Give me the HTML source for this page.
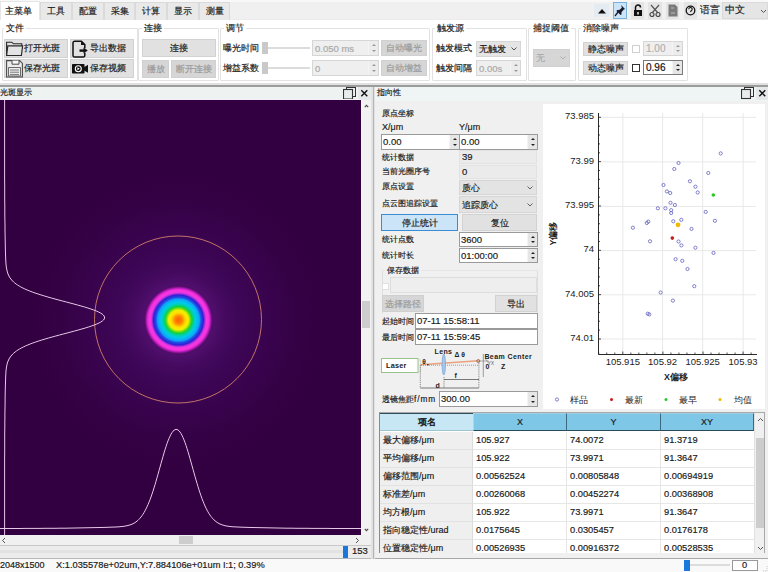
<!DOCTYPE html>
<html><head><meta charset="utf-8">
<style>
*{box-sizing:border-box;margin:0;padding:0}
html,body{width:768px;height:572px;overflow:hidden;background:#f0f0f0}
body{position:relative;font-family:"Liberation Sans",sans-serif;font-size:9px;color:#1a1a1a;line-height:1;-webkit-text-stroke-width:0.18px}
.a{position:absolute}
.t{position:absolute;white-space:nowrap;line-height:12px}
.tab{position:absolute;top:2px;height:18px;background:#e9e9e9;border:1px solid #dadada;border-bottom:none;text-align:center;line-height:17px;font-size:9.3px;color:#222}
.grp{position:absolute;border:1px solid #e2e2e2;border-radius:1px}
.gt{position:absolute;background:#fff;padding:0 2px;line-height:11px;font-size:9.3px;color:#222}
.btn{position:absolute;background:#e1e1e1;border:1px solid #d2d2d2;text-align:center;font-size:9.3px;color:#1a1a1a}
.dis{background:#d6d6d6;border-color:#d0d0d0;color:#9a9a9a}
.inp{position:absolute;background:#fff;border:1px solid #7a7a7a}
.inpd{position:absolute;background:#efefef;border:1px solid #d6d6d6;color:#a0a0a0}
.spin{position:absolute;right:1px;top:1px;bottom:1px;width:8px}
.sp{position:absolute;right:0;top:0;bottom:0;width:10px;background:#e6e6e6;border-left:1px solid #f4f4f4}
.sp:before{content:"";position:absolute;left:3px;top:3px;border-left:2px solid transparent;border-right:2px solid transparent;border-bottom:2px solid #222}
.sp:after{content:"";position:absolute;left:3px;bottom:3px;border-left:2px solid transparent;border-right:2px solid transparent;border-top:2px solid #222}
.spd:before{border-bottom-color:#999}.spd:after{border-top-color:#999}
.cv{position:absolute;right:3px;top:50%;margin-top:-2px;width:6px;height:4px}
</style></head><body>

<!-- ===== top tab bar ===== -->
<div class="a" style="left:0;top:0;width:768px;height:20px;background:#f0f0f0"></div>
<div class="a" style="left:0;top:0;width:768px;height:1.5px;background:#f8f8f8"></div>
<div class="a" style="left:0;top:18.5px;width:768px;height:1.5px;background:#ebebeb"></div>
<div class="a" style="left:0;top:1px;width:40px;height:20px;background:#fff;border:1px solid #e6e6e6;border-bottom:none"></div>
<div class="t" style="left:5px;top:5px;font-size:9.3px">主菜单</div>
<div class="tab" style="left:40px;width:32px">工具</div>
<div class="tab" style="left:72px;width:32px">配置</div>
<div class="tab" style="left:104px;width:31px">采集</div>
<div class="tab" style="left:135px;width:32px">计算</div>
<div class="tab" style="left:167px;width:32px">显示</div>
<div class="tab" style="left:199px;width:31px">测量</div>

<!-- ===== ribbon ===== -->
<div class="a" style="left:0;top:20px;width:768px;height:64px;background:#fff"></div>
<!-- group 文件 -->
<div class="grp" style="left:2px;top:28px;width:136px;height:53px"></div>
<div class="gt" style="left:4px;top:23px">文件</div>
<div class="btn" style="left:4px;top:39px;width:64px;height:19px"></div>
<div class="t" style="left:24px;top:42px;font-size:9.3px">打开光斑</div>
<svg class="a" style="left:5px;top:41px" width="19" height="16" viewBox="0 0 19 16"><path d="M1.6 14.5V1.2h5.2l1.6 1.6h8.4v2" fill="none" stroke="#2a2a2a" stroke-width="1.1"/><path d="M1.6 14.5l1.2-9.6h14.8l-1.2 9.6z" fill="#e4e4e4" stroke="#2a2a2a" stroke-width="1.2"/></svg>
<div class="btn" style="left:70px;top:39px;width:64px;height:19px"></div>
<div class="t" style="left:90px;top:42px;font-size:9.3px">导出数据</div>
<svg class="a" style="left:72px;top:39.5px" width="17" height="18" viewBox="0 0 17 18"><path d="M12.8 8.2V4.6L9.4 1.2H2.6A1.6 1.6 0 0 0 1 2.8v12.6A1.6 1.6 0 0 0 2.6 17h8.6a1.6 1.6 0 0 0 1.6-1.6v-2.6" fill="none" stroke="#111" stroke-width="1.5"/><path d="M9 1.5v3.6h3.6z" fill="#111"/><path d="M7.5 10.6h4.5" stroke="#111" stroke-width="2.4"/><path d="M11.5 7.6l4.3 3-4.3 3z" fill="#111"/></svg>
<div class="btn" style="left:4px;top:59px;width:64px;height:19px"></div>
<div class="t" style="left:24px;top:62px;font-size:9.3px">保存光斑</div>
<svg class="a" style="left:6px;top:60px" width="17" height="18" viewBox="0 0 17 18"><path d="M0.6 0.6h13l2.8 2.8v13.6h-15.8z" fill="#ececec" stroke="#4a4a4a" stroke-width="1.1"/><path d="M6 0.6v3.6h7v-3.6" fill="#f8f8f8" stroke="#4a4a4a" stroke-width="1"/><rect x="2.6" y="7.6" width="11.8" height="8.4" fill="#f4f4f4" stroke="#555" stroke-width="0.9"/><path d="M4 10h9M4 12.2h9M4 14.4h9" stroke="#666" stroke-width="0.9"/></svg>
<div class="btn" style="left:70px;top:59px;width:64px;height:19px"></div>
<div class="t" style="left:90px;top:62px;font-size:9.3px">保存视频</div>
<svg class="a" style="left:72px;top:64px" width="17" height="10" viewBox="0 0 17 10"><rect x="0" y="0" width="12.5" height="9.5" rx="0.8" fill="#111"/><path d="M12 3.2l4-2.4v8l-4-2.4z" fill="#111"/><circle cx="6.3" cy="4.75" r="3" fill="none" stroke="#fff" stroke-width="1.1"/><path d="M5.4 3.3l2.4 1.45-2.4 1.45z" fill="#fff"/></svg>

<!-- group 连接 -->
<div class="grp" style="left:138px;top:28px;width:81px;height:53px"></div>
<div class="gt" style="left:142px;top:23px">连接</div>
<div class="btn" style="left:142px;top:39px;width:74px;height:18px;line-height:17px">连接</div>
<div class="btn dis" style="left:142px;top:60px;width:27px;height:18px;line-height:17px">播放</div>
<div class="btn dis" style="left:171px;top:60px;width:45px;height:18px;line-height:17px">断开连接</div>

<!-- group 调节 -->
<div class="grp" style="left:220px;top:28px;width:210px;height:53px"></div>
<div class="gt" style="left:224px;top:23px">调节</div>
<div class="t" style="left:223px;top:42px;font-size:9.3px">曝光时间</div>
<div class="t" style="left:223px;top:62px;font-size:9.3px">增益系数</div>
<div class="a" style="left:268px;top:47px;width:42px;height:2px;background:#dcdcdc"></div>
<div class="a" style="left:262px;top:42px;width:6px;height:12px;background:#c9c9c9"></div>
<div class="a" style="left:268px;top:67px;width:42px;height:2px;background:#dcdcdc"></div>
<div class="a" style="left:262px;top:62px;width:6px;height:12px;background:#c9c9c9"></div>
<div class="inpd" style="left:312px;top:40px;width:67px;height:16px"><span class="t" style="left:2px;top:2px;font-size:9.5px;color:#a8a8a8">0.050 ms</span><i class="sp spd" style="background:#ececec"></i></div>
<div class="inpd" style="left:312px;top:60px;width:67px;height:16px"><span class="t" style="left:2px;top:2px;font-size:9.5px;color:#a8a8a8">0</span><i class="sp spd" style="background:#ececec"></i></div>
<div class="btn dis" style="left:381px;top:40px;width:46px;height:16px;line-height:15px">自动曝光</div>
<div class="btn dis" style="left:381px;top:60px;width:46px;height:16px;line-height:15px">自动增益</div>

<!-- group 触发源 -->
<div class="grp" style="left:432px;top:28px;width:95px;height:53px"></div>
<div class="gt" style="left:435px;top:23px">触发源</div>
<div class="t" style="left:436px;top:42px;font-size:9.3px">触发模式</div>
<div class="t" style="left:436px;top:62px;font-size:9.3px">触发间隔</div>
<div class="btn" style="left:476px;top:41px;width:45px;height:16px;background:#e5e5e5;border-color:#d6d6d6"><span class="t" style="left:2px;top:1px;font-size:9.3px">无触发</span><svg class="cv" viewBox="0 0 6 4"><path d="M0.5 0.5l2.5 2.5 2.5-2.5" fill="none" stroke="#444" stroke-width="0.9"/></svg></div>
<div class="inpd" style="left:476px;top:60px;width:45px;height:16px"><span class="t" style="left:2px;top:2px;font-size:9.5px;color:#a8a8a8">0.00s</span><i class="sp spd" style="background:#ececec"></i></div>

<!-- group 捕捉阈值 -->
<div class="grp" style="left:528px;top:28px;width:48px;height:53px"></div>
<div class="gt" style="left:531px;top:23px">捕捉阈值</div>
<div class="btn dis" style="left:533px;top:49px;width:37px;height:18px"><span class="t" style="left:2px;top:2px;color:#a8a8a8">无</span><svg class="cv" viewBox="0 0 6 4"><path d="M0.5 0.5l2.5 2.5 2.5-2.5" fill="none" stroke="#aaa" stroke-width="0.9"/></svg></div>

<!-- group 消除噪声 -->
<div class="grp" style="left:578px;top:28px;width:110px;height:53px"></div>
<div class="gt" style="left:581px;top:23px">消除噪声</div>
<div class="btn" style="left:583px;top:42px;width:45px;height:14px;line-height:13px">静态噪声</div>
<div class="btn" style="left:583px;top:61px;width:45px;height:14px;line-height:13px">动态噪声</div>
<div class="a" style="left:632px;top:45px;width:8px;height:8px;border:1px solid #d0d0d0;background:#fff"></div>
<div class="a" style="left:632px;top:64px;width:8px;height:8px;border:1px solid #333;background:#fff"></div>
<div class="inpd" style="left:643px;top:41px;width:40px;height:15px"><span class="t" style="left:2px;top:1px;font-size:10px;color:#b0b0b0">1.00</span><i class="sp spd" style="background:#ececec"></i></div>
<div class="inp" style="left:643px;top:60px;width:40px;height:15px"><span class="t" style="left:2px;top:1px;font-size:10px;color:#111">0.96</span><i class="sp"></i></div>

<!-- top-right toolbar -->
<div class="a" style="left:594px;top:4px;width:15px;height:13px;background:#e4ecf2"></div>
<svg class="a" style="left:597px;top:8px" width="10" height="6"><path d="M1 5.5L5 1l4 4.5z" fill="#111"/></svg>
<div class="a" style="left:613px;top:2px;width:14px;height:17px;background:#cce4f7;border:1px solid #7ab0dc"></div>
<svg class="a" style="left:614px;top:4px" width="12" height="13" viewBox="0 0 12 13"><path d="M7 1l4 4-1.2 0.6-2.3 2.6 0 2.2-1 0.6-4-4 0.6-1 2.2 0 2.6-2.3z" fill="#1a1a2a"/><path d="M4 8l-3 4" stroke="#1a1a2a" stroke-width="1.3"/></svg>
<div class="a" style="left:631px;top:2px;width:13px;height:17px;background:#e4e4e4"></div>
<svg class="a" style="left:633px;top:4px" width="10" height="13" viewBox="0 0 10 13"><path d="M2.5 6V3.5a2.5 2.5 0 0 1 5 0" fill="none" stroke="#111" stroke-width="1.5"/><rect x="1" y="6" width="8" height="6" fill="#111"/><rect x="4.3" y="8" width="1.4" height="2.5" fill="#fff"/></svg>
<div class="a" style="left:648px;top:2px;width:14px;height:17px;background:#e4e4e4"></div>
<svg class="a" style="left:649px;top:4px" width="12" height="13" viewBox="0 0 12 13"><path d="M2 1l7 8M10 1l-7 8" stroke="#555" stroke-width="1.2"/><circle cx="3" cy="10.5" r="2" fill="none" stroke="#444" stroke-width="1.2"/><circle cx="9" cy="10.5" r="2" fill="none" stroke="#444" stroke-width="1.2"/></svg>
<div class="a" style="left:666px;top:2px;width:13px;height:17px;background:#e4e4e4"></div>
<svg class="a" style="left:668px;top:4px" width="10" height="13" viewBox="0 0 10 13"><path d="M0.5 0.5h6.5l2.5 2.5v9.5h-9z" fill="#7a7a7a"/><path d="M3 4h3M3 9h4" stroke="#bbb" stroke-width="1"/></svg>
<div class="a" style="left:684px;top:2px;width:13px;height:17px;background:#e4e4e4"></div>
<svg class="a" style="left:685px;top:5px" width="11" height="11" viewBox="0 0 11 11"><circle cx="5.5" cy="5.5" r="4.3" fill="none" stroke="#111" stroke-width="1.3"/><path d="M3.8 4.3a1.7 1.7 0 1 1 2.4 1.5L5.5 7" fill="none" stroke="#111" stroke-width="1.1"/></svg>
<div class="t" style="left:700px;top:4px;font-size:9.5px">语言</div>
<div class="a" style="left:722px;top:2px;width:46px;height:17px;background:#e5e5e5;border:1px solid #dadada"></div>
<div class="t" style="left:725px;top:4px;font-size:9.5px">中文</div>
<svg class="a" style="left:760px;top:9px" width="7" height="5"><path d="M1 1l2.5 2.5L6 1" fill="none" stroke="#555" stroke-width="1"/></svg>

<!-- bottom separator -->
<div class="a" style="left:0;top:83px;width:768px;height:2px;background:#e0e0e0"></div>
<div class="a" style="left:0;top:85px;width:768px;height:2px;background:#9c9c9c"></div>

<!-- ===== left dock ===== -->
<div class="a" style="left:0;top:87px;width:371px;height:13px;background:#eef3f2"></div>
<div class="t" style="left:0;top:86.5px;font-size:8px">光斑显示</div>
<svg class="a" style="left:343px;top:87px" width="28" height="13" viewBox="0 0 28 13"><rect x="3.5" y="0.5" width="9" height="9" fill="none" stroke="#333" stroke-width="1"/><rect x="0.5" y="2.5" width="9" height="9.5" fill="#e8ecec" stroke="#333" stroke-width="1.1"/><rect x="15" y="0" width="13" height="13" fill="#e6e9e9"/><path d="M18.3 3.3l6 6M24.3 3.3l-6 6" stroke="#111" stroke-width="1.4"/></svg>
<div class="a" style="left:0;top:99px;width:361px;height:1px;background:#f4eef6"></div>
<svg class="a" style="left:0;top:100px" width="361" height="435" viewBox="0 100 361 435">
<defs>
<radialGradient id="spot" cx="178.5" cy="320" r="35" gradientUnits="userSpaceOnUse">
<stop offset="0.000" stop-color="#ff6000"/>
<stop offset="0.100" stop-color="#ff8000"/>
<stop offset="0.157" stop-color="#ffb000"/>
<stop offset="0.214" stop-color="#ffe000"/>
<stop offset="0.286" stop-color="#f0f000"/>
<stop offset="0.329" stop-color="#80e010"/>
<stop offset="0.386" stop-color="#10d040"/>
<stop offset="0.443" stop-color="#00d0b0"/>
<stop offset="0.514" stop-color="#00c8f0"/>
<stop offset="0.600" stop-color="#10a0f8"/>
<stop offset="0.643" stop-color="#2050e8"/>
<stop offset="0.714" stop-color="#3020d0"/>
<stop offset="0.757" stop-color="#b030e0"/>
<stop offset="0.800" stop-color="#f838e0"/>
<stop offset="0.871" stop-color="#f030d8"/>
<stop offset="0.914" stop-color="#b018b8"/>
<stop offset="0.957" stop-color="#601070"/>
<stop offset="1.000" stop-color="#400650" stop-opacity="0"/>
</radialGradient>
<radialGradient id="halo2" cx="178.5" cy="320" r="170" gradientUnits="userSpaceOnUse">
<stop offset="0" stop-color="#4c0c68" stop-opacity="1"/>
<stop offset="0.35" stop-color="#420860" stop-opacity="0.8"/>
<stop offset="0.7" stop-color="#3a0450" stop-opacity="0.35"/>
<stop offset="1" stop-color="#320040" stop-opacity="0"/>
</radialGradient>
<radialGradient id="halo" cx="178.5" cy="320" r="75" gradientUnits="userSpaceOnUse">
<stop offset="0" stop-color="#6a1a88" stop-opacity="0.9"/>
<stop offset="0.5" stop-color="#5a1478" stop-opacity="0.45"/>
<stop offset="0.8" stop-color="#3c0850" stop-opacity="0.15"/>
<stop offset="1" stop-color="#320040" stop-opacity="0"/>
</radialGradient>
</defs>
<rect x="0" y="100" width="361" height="435" fill="#320040"/>
<circle cx="178.5" cy="320" r="170" fill="url(#halo2)"/>
<circle cx="178.5" cy="320" r="75" fill="url(#halo)"/>
<circle cx="178.5" cy="320" r="35" fill="url(#spot)"/>
<circle cx="178" cy="319.5" r="83.5" fill="none" stroke="#d08068" stroke-width="0.9"/>
<path d="M4.6 100.0 L4.6 105.0 L4.6 110.0 L4.6 115.0 L4.6 120.0 L4.6 125.0 L4.6 130.0 L4.6 135.0 L4.6 140.0 L4.6 145.0 L4.6 150.0 L4.6 155.0 L4.6 160.0 L4.6 165.0 L4.6 170.0 L4.6 175.0 L4.6 180.0 L4.7 185.0 L4.7 190.0 L4.7 195.0 L4.7 200.0 L4.8 205.0 L4.8 210.0 L4.8 215.0 L4.9 220.0 L5.0 225.0 L5.0 230.0 L5.1 235.0 L5.2 240.0 L5.3 245.0 L5.4 250.0 L5.4 251.0 L5.5 252.0 L5.5 253.0 L5.5 254.0 L5.5 255.0 L5.6 256.0 L5.6 257.0 L5.7 258.0 L5.7 259.0 L5.7 260.0 L5.8 261.0 L5.9 262.0 L5.9 263.0 L6.0 264.0 L6.1 265.0 L6.2 266.0 L6.3 267.0 L6.5 268.0 L6.7 269.0 L6.9 270.0 L7.1 271.0 L7.4 272.0 L7.7 273.0 L8.0 274.0 L8.5 275.0 L8.9 276.0 L9.5 277.0 L10.1 278.0 L10.9 279.0 L11.7 280.0 L12.6 281.0 L13.6 282.0 L14.8 283.0 L16.1 284.0 L17.6 285.0 L19.2 286.0 L20.9 287.0 L22.9 288.0 L24.9 289.0 L27.2 290.0 L29.7 291.0 L32.3 292.0 L35.1 293.0 L38.1 294.0 L41.2 295.0 L44.5 296.0 L47.9 297.0 L51.4 298.0 L55.0 299.0 L58.8 300.0 L62.5 301.0 L66.3 302.0 L70.1 303.0 L73.9 304.0 L77.6 305.0 L81.1 306.0 L84.6 307.0 L87.9 308.0 L90.9 309.0 L93.7 310.0 L96.3 311.0 L98.5 312.0 L100.5 313.0 L102.1 314.0 L103.3 315.0 L104.1 316.0 L104.5 317.0 L104.6 318.0 L104.2 319.0 L103.5 320.0 L102.3 321.0 L100.8 322.0 L99.0 323.0 L96.8 324.0 L94.3 325.0 L91.5 326.0 L88.5 327.0 L85.3 328.0 L81.8 329.0 L78.3 330.0 L74.6 331.0 L70.9 332.0 L67.1 333.0 L63.3 334.0 L59.5 335.0 L55.8 336.0 L52.1 337.0 L48.6 338.0 L45.1 339.0 L41.8 340.0 L38.7 341.0 L35.7 342.0 L32.8 343.0 L30.2 344.0 L27.7 345.0 L25.4 346.0 L23.3 347.0 L21.3 348.0 L19.5 349.0 L17.9 350.0 L16.4 351.0 L15.1 352.0 L13.9 353.0 L12.8 354.0 L11.9 355.0 L11.0 356.0 L10.3 357.0 L9.6 358.0 L9.0 359.0 L8.6 360.0 L8.1 361.0 L7.7 362.0 L7.4 363.0 L7.1 364.0 L6.9 365.0 L6.7 366.0 L6.5 367.0 L6.4 368.0 L6.2 369.0 L6.1 370.0 L6.0 371.0 L5.9 372.0 L5.9 373.0 L5.8 374.0 L5.8 375.0 L5.7 376.0 L5.7 377.0 L5.6 378.0 L5.6 379.0 L5.6 380.0 L5.5 381.0 L5.5 382.0 L5.5 383.0 L5.4 384.0 L5.4 385.0 L5.4 386.0 L5.4 387.0 L5.3 388.0 L5.2 393.0 L5.1 398.0 L5.1 403.0 L5.0 408.0 L4.9 413.0 L4.9 418.0 L4.8 423.0 L4.8 428.0 L4.7 433.0 L4.7 438.0 L4.7 443.0 L4.7 448.0 L4.7 453.0 L4.6 458.0 L4.6 463.0 L4.6 468.0 L4.6 473.0 L4.6 478.0 L4.6 483.0 L4.6 488.0 L4.6 493.0 L4.6 498.0 L4.6 503.0 L4.6 508.0 L4.6 513.0 L4.6 518.0 L4.6 523.0 L4.6 528.0 L4.6 533.0 L4.6 535.0" fill="none" stroke="#e8c8e8" stroke-width="1"/>
<path d="M0.0 528.5 L5.0 528.5 L10.0 528.5 L15.0 528.5 L20.0 528.5 L25.0 528.4 L30.0 528.4 L35.0 528.4 L40.0 528.4 L45.0 528.3 L50.0 528.3 L55.0 528.3 L60.0 528.2 L65.0 528.2 L70.0 528.1 L75.0 528.0 L80.0 527.9 L85.0 527.8 L90.0 527.7 L95.0 527.6 L100.0 527.5 L105.0 527.4 L110.0 527.2 L111.0 527.2 L112.0 527.1 L113.0 527.1 L114.0 527.1 L115.0 527.0 L116.0 527.0 L117.0 526.9 L118.0 526.9 L119.0 526.8 L120.0 526.7 L121.0 526.6 L122.0 526.5 L123.0 526.4 L124.0 526.3 L125.0 526.1 L126.0 525.9 L127.0 525.7 L128.0 525.5 L129.0 525.2 L130.0 524.9 L131.0 524.6 L132.0 524.2 L133.0 523.7 L134.0 523.2 L135.0 522.6 L136.0 521.9 L137.0 521.1 L138.0 520.3 L139.0 519.3 L140.0 518.2 L141.0 517.0 L142.0 515.7 L143.0 514.2 L144.0 512.6 L145.0 510.8 L146.0 508.9 L147.0 506.8 L148.0 504.6 L149.0 502.2 L150.0 499.7 L151.0 497.0 L152.0 494.1 L153.0 491.1 L154.0 487.9 L155.0 484.7 L156.0 481.3 L157.0 477.8 L158.0 474.3 L159.0 470.7 L160.0 467.1 L161.0 463.5 L162.0 460.0 L163.0 456.5 L164.0 453.0 L165.0 449.7 L166.0 446.6 L167.0 443.6 L168.0 440.9 L169.0 438.4 L170.0 436.2 L171.0 434.2 L172.0 432.6 L173.0 431.2 L174.0 430.3 L175.0 429.7 L176.0 429.4 L177.0 429.5 L178.0 430.0 L179.0 430.8 L180.0 432.0 L181.0 433.5 L182.0 435.3 L183.0 437.5 L184.0 439.9 L185.0 442.5 L186.0 445.4 L187.0 448.5 L188.0 451.7 L189.0 455.1 L190.0 458.5 L191.0 462.1 L192.0 465.7 L193.0 469.3 L194.0 472.9 L195.0 476.4 L196.0 479.9 L197.0 483.3 L198.0 486.6 L199.0 489.8 L200.0 492.9 L201.0 495.8 L202.0 498.6 L203.0 501.2 L204.0 503.7 L205.0 506.0 L206.0 508.1 L207.0 510.1 L208.0 511.9 L209.0 513.6 L210.0 515.1 L211.0 516.5 L212.0 517.7 L213.0 518.9 L214.0 519.9 L215.0 520.8 L216.0 521.6 L217.0 522.3 L218.0 523.0 L219.0 523.5 L220.0 524.0 L221.0 524.4 L222.0 524.8 L223.0 525.1 L224.0 525.4 L225.0 525.7 L226.0 525.9 L227.0 526.1 L228.0 526.2 L229.0 526.4 L230.0 526.5 L231.0 526.6 L232.0 526.7 L233.0 526.8 L234.0 526.8 L235.0 526.9 L236.0 526.9 L237.0 527.0 L238.0 527.0 L239.0 527.1 L240.0 527.1 L241.0 527.2 L242.0 527.2 L243.0 527.2 L244.0 527.3 L245.0 527.3 L246.0 527.3 L247.0 527.4 L252.0 527.5 L257.0 527.6 L262.0 527.7 L267.0 527.8 L272.0 527.9 L277.0 528.0 L282.0 528.1 L287.0 528.2 L292.0 528.2 L297.0 528.3 L302.0 528.3 L307.0 528.3 L312.0 528.4 L317.0 528.4 L322.0 528.4 L327.0 528.4 L332.0 528.5 L337.0 528.5 L342.0 528.5 L347.0 528.5 L352.0 528.5 L357.0 528.5 L361.0 528.5" fill="none" stroke="#e8c8e8" stroke-width="1"/>
</svg>
<div class="a" style="left:361px;top:100px;width:10.5px;height:435px;background:#f2f2f2;border-left:1.5px solid #faf4fa;border-right:1px solid #d4d4d4"></div>
<div class="a" style="left:362px;top:301px;width:8px;height:27px;background:#cdcdcd"></div>
<svg class="a" style="left:364px;top:104px" width="5" height="4"><path d="M0.8 3.2l1.7-1.8 1.7 1.8" fill="none" stroke="#444" stroke-width="1.1"/></svg>
<svg class="a" style="left:364px;top:528px" width="5" height="4"><path d="M0.8 0.8l1.7 1.8 1.7-1.8" fill="none" stroke="#444" stroke-width="1.1"/></svg>
<div class="a" style="left:0;top:535px;width:361px;height:10px;background:#f0f0f0"></div>
<div class="a" style="left:179px;top:536px;width:14px;height:8px;background:#cdcdcd"></div>
<svg class="a" style="left:1px;top:537px" width="5" height="7"><path d="M4 1L1.5 3.5 4 6" fill="none" stroke="#555" stroke-width="1"/></svg>
<svg class="a" style="left:355px;top:537px" width="5" height="7"><path d="M1 1l2.5 2.5L1 6" fill="none" stroke="#555" stroke-width="1"/></svg>
<div class="a" style="left:361px;top:535px;width:10px;height:10px;background:#f0f0f0"></div>
<div class="a" style="left:0;top:545px;width:372px;height:14px;background:#ececec;border-top:1px solid #c8c8c8;border-bottom:1px solid #b8b8b8;border-right:1px solid #c8c8c8"></div>
<div class="a" style="left:0;top:550px;width:343px;height:3px;background:#e2e2e2"></div>
<div class="a" style="left:343px;top:546px;width:5px;height:12px;background:#1a78dc"></div>
<div class="t" style="left:352px;top:545px;font-size:9.5px">153</div>

<!-- splitter -->
<div class="a" style="left:371px;top:87px;width:4px;height:472px;background:#e2e2e2"></div>
<div class="a" style="left:372.5px;top:87px;width:1.5px;height:472px;background:#b4b4b4"></div>

<!-- ===== right dock ===== -->


<div class="a" style="left:375px;top:100px;width:393px;height:459px;background:#f0f0f0;border-bottom:1px solid #a8a8a8"></div>
<div class="a" style="left:375px;top:87px;width:393px;height:14px;background:#eff4f4"></div>
<div class="t" style="left:376.5px;top:85.5px;font-size:8.3px">指向性</div>
<svg class="a" style="left:741px;top:87px" width="27" height="13" viewBox="0 0 27 13"><rect x="3.5" y="0.5" width="9" height="9" fill="none" stroke="#333" stroke-width="1"/><rect x="0.5" y="2.5" width="9" height="9" fill="#e8ecec" stroke="#333" stroke-width="1.1"/><rect x="15" y="0" width="12" height="13" fill="#e6e9e9"/><path d="M18.3 3.3l6 6M24.3 3.3l-6 6" stroke="#111" stroke-width="1.4"/></svg>
<!-- form -->
<div class="t" style="left:382px;top:107px;font-size:8.3px">原点坐标</div>
<div class="t" style="left:382px;top:121px">X/μm</div>
<div class="t" style="left:459px;top:121px">Y/μm</div>
<div class="inp" style="left:381px;top:134px;width:79px;height:16px;border-color:#9a9a9a"><span class="t" style="left:1px;top:1px;font-size:9.5px">0.00</span><i class="sp"></i></div>
<div class="inp" style="left:459px;top:134px;width:79px;height:16px;border-color:#9a9a9a"><span class="t" style="left:1px;top:1px;font-size:9.5px">0.00</span><i class="sp"></i></div>
<div class="t" style="left:382px;top:151px;font-size:8.3px">统计数据</div>
<div class="a" style="left:459px;top:150px;width:78px;height:14px;background:#ebebeb;border:1px solid #e2e2e2"><span class="t" style="left:2px;top:0px;font-size:9.5px">39</span></div>
<div class="t" style="left:382px;top:165px;font-size:8.3px">当前光圈序号</div>
<div class="a" style="left:459px;top:165px;width:78px;height:14px;background:#ebebeb;border:1px solid #e2e2e2"><span class="t" style="left:2px;top:0px;font-size:9.5px">0</span></div>
<div class="t" style="left:382px;top:180px;font-size:8.3px">原点设置</div>
<div class="a" style="left:459px;top:180px;width:78px;height:15px;background:#e3e3e3;border:1px solid #d6d6d6"><span class="t" style="left:2px;top:1px">质心</span><svg class="cv" viewBox="0 0 6 4"><path d="M0.5 0.5l2.5 2.5 2.5-2.5" fill="none" stroke="#555" stroke-width="0.9"/></svg></div>
<div class="t" style="left:382px;top:197px;font-size:8.3px">点云图追踪设置</div>
<div class="a" style="left:459px;top:196px;width:78px;height:17px;background:#e3e3e3;border:1px solid #d6d6d6"><span class="t" style="left:2px;top:2px">追踪质心</span><svg class="cv" viewBox="0 0 6 4"><path d="M0.5 0.5l2.5 2.5 2.5-2.5" fill="none" stroke="#555" stroke-width="0.9"/></svg></div>
<div class="btn" style="left:381px;top:214px;width:77px;height:17px;line-height:16px;background:#cce4f7;border-color:#3c8cd4;font-size:8.6px">停止统计</div>
<div class="btn" style="left:462px;top:214px;width:75px;height:17px;line-height:16px;font-size:8.6px">复位</div>
<div class="t" style="left:382px;top:233px;font-size:8.3px">统计点数</div>
<div class="inp" style="left:459px;top:232px;width:79px;height:15px;border-color:#9a9a9a"><span class="t" style="left:1px;top:1px;font-size:9.5px">3600</span><i class="sp"></i></div>
<div class="t" style="left:382px;top:249px;font-size:8.3px">统计时长</div>
<div class="inp" style="left:459px;top:248px;width:79px;height:15px;border-color:#9a9a9a"><span class="t" style="left:1px;top:1px;font-size:9.5px">01:00:00</span><i class="sp"></i></div>
<div class="grp" style="left:382px;top:270px;width:156px;height:44px;border-color:#dedede;border-top-color:#e6e6e6;border-bottom:none"></div>
<div class="t" style="left:385px;top:264px;background:#f0f0f0;padding:0 2px;font-size:8.3px">保存数据</div>
<div class="a" style="left:382px;top:283px;width:7px;height:7px;background:#fff;border:1px solid #e0e0e0"></div>
<div class="a" style="left:390px;top:277px;width:147px;height:16px;background:#eeeeee;border:1px solid #dedede"></div>
<div class="btn dis" style="left:382px;top:295px;width:42px;height:17px;line-height:16px;font-size:8.6px">选择路径</div>
<div class="btn" style="left:495px;top:295px;width:42px;height:17px;line-height:16px;font-size:8.6px">导出</div>
<div class="t" style="left:382px;top:315px;font-size:8.3px">起始时间</div>
<div class="inp" style="left:415px;top:313px;width:123px;height:16px;border-color:#9a9a9a"><span class="t" style="left:1px;top:1px;font-size:9.5px">07-11 15:58:11</span></div>
<div class="t" style="left:382px;top:331px;font-size:8.3px">最后时间</div>
<div class="inp" style="left:415px;top:329px;width:123px;height:16px;border-color:#9a9a9a"><span class="t" style="left:1px;top:1px;font-size:9.5px">07-11 15:59:45</span></div>
<!-- diagram -->
<svg class="a" style="left:378px;top:345px" width="162" height="46" viewBox="378 345 162 46" font-family="Liberation Sans" font-weight="bold">
<rect x="381.5" y="358.5" width="36.5" height="14" fill="#fff" stroke="#98c48a" stroke-width="1"/>
<text x="386" y="368.3" font-size="7.3" fill="#222" letter-spacing="0.2">Laser</text>
<path d="M418 360h2.5v11.5h-2.5" fill="none" stroke="#c8c8c8" stroke-width="0.6"/>
<path d="M420.3 365v23M478.9 361v27M444 377v11" stroke="#444" stroke-width="0.6" stroke-dasharray="1.2 0.9"/>
<path d="M420.5 364.7L478.5 360.8" stroke="#eaa27c" stroke-width="1.6"/>
<path d="M421 365.2h57" stroke="#333" stroke-width="0.5" stroke-dasharray="0.9 1.1"/>
<circle cx="478.3" cy="361" r="1.5" fill="none" stroke="#a05030" stroke-width="0.8"/>
<circle cx="428" cy="364.8" r="0.8" fill="#222"/>
<ellipse cx="443.8" cy="364.5" rx="1.7" ry="10.5" fill="#a6c6ea" stroke="#6a9ad0" stroke-width="0.6"/>
<path d="M444 379.5h35M420.3 388h58.6" stroke="#444" stroke-width="0.7"/>
<path d="M483.3 354v23" stroke="#777" stroke-width="0.7"/>
<path d="M478.5 361h10M485.5 359l3.5 4.5" stroke="#666" stroke-width="0.5"/>
<text x="434.6" y="354.2" font-size="7" fill="#222" letter-spacing="0.35">Lens</text>
<text x="454.5" y="357.3" font-size="6.8" fill="#222">Δ θ</text>
<text x="422.2" y="363.5" font-size="6.6" fill="#222">θ</text>
<text x="484.4" y="359.3" font-size="7" fill="#222" letter-spacing="0.42">Beam Center</text>
<text x="485.6" y="368.5" font-size="7" fill="#222">0</text>
<text x="488" y="364.5" font-size="4.5" fill="#555" font-weight="normal">YX</text>
<text x="501" y="368.5" font-size="7" fill="#222">Z</text>
<text x="454.5" y="377.5" font-size="7" fill="#222">f</text>
<text x="435.5" y="387.5" font-size="7" fill="#222">d</text>
</svg>
<div class="t" style="left:382px;top:393px;font-size:8.3px">透镜焦距<span style="letter-spacing:0.9px">f/mm</span></div>
<svg class="a" style="left:543px;top:104px" width="222" height="305" viewBox="543 104 222 305" font-family="Liberation Sans">
<rect x="543" y="104" width="222" height="305" fill="#fff"/>
<path d="M598 117.3H756" stroke="#e8e8e8" stroke-width="1"/>
<path d="M598 161.9H756" stroke="#e8e8e8" stroke-width="1"/>
<path d="M598 206.4H756" stroke="#e8e8e8" stroke-width="1"/>
<path d="M598 250.6H756" stroke="#e8e8e8" stroke-width="1"/>
<path d="M598 294.8H756" stroke="#e8e8e8" stroke-width="1"/>
<path d="M598 339H756" stroke="#e8e8e8" stroke-width="1"/>
<path d="M622.8 113V354" stroke="#e8e8e8" stroke-width="1"/>
<path d="M662.6 113V354" stroke="#e8e8e8" stroke-width="1"/>
<path d="M702.7 113V354" stroke="#e8e8e8" stroke-width="1"/>
<path d="M743.1 113V354" stroke="#e8e8e8" stroke-width="1"/>
<path d="M598.5 113V354.5H757" fill="none" stroke="#2a2a2a" stroke-width="1"/>
<path d="M598 117.30h3" stroke="#222" stroke-width="0.8"/>
<path d="M598 126.17h2" stroke="#222" stroke-width="0.8"/>
<path d="M598 135.04h2" stroke="#222" stroke-width="0.8"/>
<path d="M598 143.90h2" stroke="#222" stroke-width="0.8"/>
<path d="M598 152.77h2" stroke="#222" stroke-width="0.8"/>
<path d="M598 161.64h3" stroke="#222" stroke-width="0.8"/>
<path d="M598 170.51h2" stroke="#222" stroke-width="0.8"/>
<path d="M598 179.38h2" stroke="#222" stroke-width="0.8"/>
<path d="M598 188.24h2" stroke="#222" stroke-width="0.8"/>
<path d="M598 197.11h2" stroke="#222" stroke-width="0.8"/>
<path d="M598 205.98h3" stroke="#222" stroke-width="0.8"/>
<path d="M598 214.85h2" stroke="#222" stroke-width="0.8"/>
<path d="M598 223.72h2" stroke="#222" stroke-width="0.8"/>
<path d="M598 232.58h2" stroke="#222" stroke-width="0.8"/>
<path d="M598 241.45h2" stroke="#222" stroke-width="0.8"/>
<path d="M598 250.32h3" stroke="#222" stroke-width="0.8"/>
<path d="M598 259.19h2" stroke="#222" stroke-width="0.8"/>
<path d="M598 268.06h2" stroke="#222" stroke-width="0.8"/>
<path d="M598 276.92h2" stroke="#222" stroke-width="0.8"/>
<path d="M598 285.79h2" stroke="#222" stroke-width="0.8"/>
<path d="M598 294.66h3" stroke="#222" stroke-width="0.8"/>
<path d="M598 303.53h2" stroke="#222" stroke-width="0.8"/>
<path d="M598 312.40h2" stroke="#222" stroke-width="0.8"/>
<path d="M598 321.26h2" stroke="#222" stroke-width="0.8"/>
<path d="M598 330.13h2" stroke="#222" stroke-width="0.8"/>
<path d="M598 339.00h3" stroke="#222" stroke-width="0.8"/>
<path d="M598.74 354.5v-2" stroke="#222" stroke-width="0.8"/>
<path d="M606.76 354.5v-2" stroke="#222" stroke-width="0.8"/>
<path d="M614.78 354.5v-2" stroke="#222" stroke-width="0.8"/>
<path d="M622.80 354.5v-3" stroke="#222" stroke-width="0.8"/>
<path d="M630.82 354.5v-2" stroke="#222" stroke-width="0.8"/>
<path d="M638.84 354.5v-2" stroke="#222" stroke-width="0.8"/>
<path d="M646.86 354.5v-2" stroke="#222" stroke-width="0.8"/>
<path d="M654.88 354.5v-2" stroke="#222" stroke-width="0.8"/>
<path d="M662.90 354.5v-3" stroke="#222" stroke-width="0.8"/>
<path d="M670.92 354.5v-2" stroke="#222" stroke-width="0.8"/>
<path d="M678.94 354.5v-2" stroke="#222" stroke-width="0.8"/>
<path d="M686.96 354.5v-2" stroke="#222" stroke-width="0.8"/>
<path d="M694.98 354.5v-2" stroke="#222" stroke-width="0.8"/>
<path d="M703.00 354.5v-3" stroke="#222" stroke-width="0.8"/>
<path d="M711.02 354.5v-2" stroke="#222" stroke-width="0.8"/>
<path d="M719.04 354.5v-2" stroke="#222" stroke-width="0.8"/>
<path d="M727.06 354.5v-2" stroke="#222" stroke-width="0.8"/>
<path d="M735.08 354.5v-2" stroke="#222" stroke-width="0.8"/>
<path d="M743.10 354.5v-3" stroke="#222" stroke-width="0.8"/>
<path d="M751.12 354.5v-2" stroke="#222" stroke-width="0.8"/>
<text x="594" y="119.1" font-size="9.5" text-anchor="end" fill="#222">73.985</text>
<text x="594" y="163.7" font-size="9.5" text-anchor="end" fill="#222">73.99</text>
<text x="594" y="208.2" font-size="9.5" text-anchor="end" fill="#222">73.995</text>
<text x="594" y="252.4" font-size="9.5" text-anchor="end" fill="#222">74</text>
<text x="594" y="296.6" font-size="9.5" text-anchor="end" fill="#222">74.005</text>
<text x="594" y="340.8" font-size="9.5" text-anchor="end" fill="#222">74.01</text>
<text x="622.8" y="365" font-size="9.5" text-anchor="middle" fill="#222">105.915</text>
<text x="662.6" y="365" font-size="9.5" text-anchor="middle" fill="#222">105.92</text>
<text x="702.7" y="365" font-size="9.5" text-anchor="middle" fill="#222">105.925</text>
<text x="743.1" y="365" font-size="9.5" text-anchor="middle" fill="#222">105.93</text>
<text x="676" y="379.5" font-size="8.8" font-weight="bold" text-anchor="middle" fill="#222">X偏移</text>
<text transform="translate(556 233.6) rotate(-90)" font-size="8.8" font-weight="bold" text-anchor="middle" fill="#222">Y偏移</text>
<circle cx="720.7" cy="153.4" r="1.6" fill="none" stroke="#5a5ab8" stroke-width="0.75"/>
<circle cx="678.5" cy="163" r="1.6" fill="none" stroke="#5a5ab8" stroke-width="0.75"/>
<circle cx="674.3" cy="169" r="1.6" fill="none" stroke="#5a5ab8" stroke-width="0.75"/>
<circle cx="708.3" cy="173" r="1.6" fill="none" stroke="#5a5ab8" stroke-width="0.75"/>
<circle cx="689.9" cy="181.25" r="1.6" fill="none" stroke="#5a5ab8" stroke-width="0.75"/>
<circle cx="663.5" cy="185" r="1.6" fill="none" stroke="#5a5ab8" stroke-width="0.75"/>
<circle cx="695.4" cy="186.7" r="1.6" fill="none" stroke="#5a5ab8" stroke-width="0.75"/>
<circle cx="666.9" cy="191.4" r="1.6" fill="none" stroke="#5a5ab8" stroke-width="0.75"/>
<circle cx="670.2" cy="193" r="1.6" fill="none" stroke="#5a5ab8" stroke-width="0.75"/>
<circle cx="697.7" cy="192.5" r="1.6" fill="none" stroke="#5a5ab8" stroke-width="0.75"/>
<circle cx="670.5" cy="202.8" r="1.6" fill="none" stroke="#5a5ab8" stroke-width="0.75"/>
<circle cx="674.9" cy="205" r="1.6" fill="none" stroke="#5a5ab8" stroke-width="0.75"/>
<circle cx="657.9" cy="208.3" r="1.6" fill="none" stroke="#5a5ab8" stroke-width="0.75"/>
<circle cx="665.4" cy="208.3" r="1.6" fill="none" stroke="#5a5ab8" stroke-width="0.75"/>
<circle cx="671.2" cy="210.2" r="1.6" fill="none" stroke="#5a5ab8" stroke-width="0.75"/>
<circle cx="671.2" cy="213" r="1.6" fill="none" stroke="#5a5ab8" stroke-width="0.75"/>
<circle cx="705.7" cy="211.9" r="1.6" fill="none" stroke="#5a5ab8" stroke-width="0.75"/>
<circle cx="681.3" cy="219.8" r="1.6" fill="none" stroke="#5a5ab8" stroke-width="0.75"/>
<circle cx="673.3" cy="221.25" r="1.6" fill="none" stroke="#5a5ab8" stroke-width="0.75"/>
<circle cx="714.9" cy="220.8" r="1.6" fill="none" stroke="#5a5ab8" stroke-width="0.75"/>
<circle cx="648.3" cy="221.6" r="1.6" fill="none" stroke="#5a5ab8" stroke-width="0.75"/>
<circle cx="646.8" cy="223" r="1.6" fill="none" stroke="#5a5ab8" stroke-width="0.75"/>
<circle cx="632.9" cy="227.7" r="1.6" fill="none" stroke="#5a5ab8" stroke-width="0.75"/>
<circle cx="691.5" cy="228.9" r="1.6" fill="none" stroke="#5a5ab8" stroke-width="0.75"/>
<circle cx="650" cy="241.3" r="1.6" fill="none" stroke="#5a5ab8" stroke-width="0.75"/>
<circle cx="678.5" cy="241.5" r="1.6" fill="none" stroke="#5a5ab8" stroke-width="0.75"/>
<circle cx="681.4" cy="245.4" r="1.6" fill="none" stroke="#5a5ab8" stroke-width="0.75"/>
<circle cx="695.4" cy="247.7" r="1.6" fill="none" stroke="#5a5ab8" stroke-width="0.75"/>
<circle cx="713.5" cy="252.9" r="1.6" fill="none" stroke="#5a5ab8" stroke-width="0.75"/>
<circle cx="675.6" cy="259.2" r="1.6" fill="none" stroke="#5a5ab8" stroke-width="0.75"/>
<circle cx="682.3" cy="260.8" r="1.6" fill="none" stroke="#5a5ab8" stroke-width="0.75"/>
<circle cx="687.5" cy="269" r="1.6" fill="none" stroke="#5a5ab8" stroke-width="0.75"/>
<circle cx="694.3" cy="286.2" r="1.6" fill="none" stroke="#5a5ab8" stroke-width="0.75"/>
<circle cx="660.6" cy="292.5" r="1.6" fill="none" stroke="#5a5ab8" stroke-width="0.75"/>
<circle cx="672.9" cy="300.6" r="1.6" fill="none" stroke="#5a5ab8" stroke-width="0.75"/>
<circle cx="647.7" cy="313.7" r="1.6" fill="none" stroke="#5a5ab8" stroke-width="0.75"/>
<circle cx="649.3" cy="314.4" r="1.6" fill="none" stroke="#5a5ab8" stroke-width="0.75"/>
<circle cx="713.3" cy="195" r="1.8" fill="#28c828"/>
<circle cx="672.3" cy="238.1" r="1.8" fill="#c81818"/>
<circle cx="678" cy="224.8" r="2.4" fill="#f0b800"/>
<circle cx="557" cy="399.5" r="1.6" fill="none" stroke="#5a5ab8" stroke-width="0.75"/>
<text x="570" y="403" font-size="9" fill="#222">样品</text>
<circle cx="611.5" cy="399.5" r="1.5" fill="#c81818"/>
<text x="625" y="403" font-size="9" fill="#222">最新</text>
<circle cx="666" cy="399.5" r="1.5" fill="#28c828"/>
<text x="679" y="403" font-size="9" fill="#222">最早</text>
<circle cx="720" cy="399.5" r="1.5" fill="#f0b800"/>
<text x="734" y="403" font-size="9" fill="#222">均值</text>
</svg>
<!-- table -->
<div class="a" style="left:379px;top:412px;width:386px;height:141px;overflow:hidden;background:#fff;border-left:1px solid #8a8a8a;border-top:1px solid #a8a8a8">
<div class="a" style="left:0;top:0;width:93px;height:18px;background:#c6e7f3;border-top:1.5px solid #2e4e5e;border-bottom:1px solid #9ec4d2;text-align:center;line-height:17px;font-size:8.5px;-webkit-text-stroke-width:0.45px">项名</div>
<div class="a" style="left:93px;top:0;width:94px;height:18px;background:#7fc7e6;border-left:1px solid #a8d8ec;border-right:1px solid #3a6a80;border-top:1px solid #9fcfe2;border-bottom:1.5px solid #2a4a5a;text-align:center;line-height:17px;font-size:9px">X</div>
<div class="a" style="left:187px;top:0;width:94px;height:18px;background:#7fc7e6;border-top:1px solid #9fcfe2;border-right:1px solid #3a6a80;border-bottom:1.5px solid #2a4a5a;text-align:center;line-height:17px;font-size:9px">Y</div>
<div class="a" style="left:281px;top:0;width:93px;height:18px;background:#7fc7e6;border-top:1px solid #9fcfe2;border-right:1px solid #3a6a80;border-bottom:1.5px solid #2a4a5a;text-align:center;line-height:17px;font-size:9px">XY</div>
<div class="a" style="left:0;top:18.50px;width:93px;height:18px;background:#efefef;border-bottom:1px solid #e2e2e2;border-right:1px solid #dcdcdc"></div>
<div class="t" style="left:3px;top:20.50px">最大偏移/μm</div>
<div class="a" style="left:93px;top:18.50px;width:94px;height:18px;border-bottom:1px solid #e6e6e6;border-right:1px solid #e6e6e6"></div>
<div class="t" style="left:96px;top:20.50px;font-size:9.3px">105.927</div>
<div class="a" style="left:187px;top:18.50px;width:94px;height:18px;border-bottom:1px solid #e6e6e6;border-right:1px solid #e6e6e6"></div>
<div class="t" style="left:190px;top:20.50px;font-size:9.3px">74.0072</div>
<div class="a" style="left:281px;top:18.50px;width:94px;height:18px;border-bottom:1px solid #e6e6e6;border-right:1px solid #e6e6e6"></div>
<div class="t" style="left:284px;top:20.50px;font-size:9.3px">91.3719</div>
<div class="a" style="left:0;top:36.58px;width:93px;height:18px;background:#efefef;border-bottom:1px solid #e2e2e2;border-right:1px solid #dcdcdc"></div>
<div class="t" style="left:3px;top:38.58px">平均偏移/μm</div>
<div class="a" style="left:93px;top:36.58px;width:94px;height:18px;border-bottom:1px solid #e6e6e6;border-right:1px solid #e6e6e6"></div>
<div class="t" style="left:96px;top:38.58px;font-size:9.3px">105.922</div>
<div class="a" style="left:187px;top:36.58px;width:94px;height:18px;border-bottom:1px solid #e6e6e6;border-right:1px solid #e6e6e6"></div>
<div class="t" style="left:190px;top:38.58px;font-size:9.3px">73.9971</div>
<div class="a" style="left:281px;top:36.58px;width:94px;height:18px;border-bottom:1px solid #e6e6e6;border-right:1px solid #e6e6e6"></div>
<div class="t" style="left:284px;top:38.58px;font-size:9.3px">91.3647</div>
<div class="a" style="left:0;top:54.66px;width:93px;height:18px;background:#efefef;border-bottom:1px solid #e2e2e2;border-right:1px solid #dcdcdc"></div>
<div class="t" style="left:3px;top:56.66px">偏移范围/μm</div>
<div class="a" style="left:93px;top:54.66px;width:94px;height:18px;border-bottom:1px solid #e6e6e6;border-right:1px solid #e6e6e6"></div>
<div class="t" style="left:96px;top:56.66px;font-size:9.3px">0.00562524</div>
<div class="a" style="left:187px;top:54.66px;width:94px;height:18px;border-bottom:1px solid #e6e6e6;border-right:1px solid #e6e6e6"></div>
<div class="t" style="left:190px;top:56.66px;font-size:9.3px">0.00805848</div>
<div class="a" style="left:281px;top:54.66px;width:94px;height:18px;border-bottom:1px solid #e6e6e6;border-right:1px solid #e6e6e6"></div>
<div class="t" style="left:284px;top:56.66px;font-size:9.3px">0.00694919</div>
<div class="a" style="left:0;top:72.74px;width:93px;height:18px;background:#efefef;border-bottom:1px solid #e2e2e2;border-right:1px solid #dcdcdc"></div>
<div class="t" style="left:3px;top:74.74px">标准差/μm</div>
<div class="a" style="left:93px;top:72.74px;width:94px;height:18px;border-bottom:1px solid #e6e6e6;border-right:1px solid #e6e6e6"></div>
<div class="t" style="left:96px;top:74.74px;font-size:9.3px">0.00260068</div>
<div class="a" style="left:187px;top:72.74px;width:94px;height:18px;border-bottom:1px solid #e6e6e6;border-right:1px solid #e6e6e6"></div>
<div class="t" style="left:190px;top:74.74px;font-size:9.3px">0.00452274</div>
<div class="a" style="left:281px;top:72.74px;width:94px;height:18px;border-bottom:1px solid #e6e6e6;border-right:1px solid #e6e6e6"></div>
<div class="t" style="left:284px;top:74.74px;font-size:9.3px">0.00368908</div>
<div class="a" style="left:0;top:90.82px;width:93px;height:18px;background:#efefef;border-bottom:1px solid #e2e2e2;border-right:1px solid #dcdcdc"></div>
<div class="t" style="left:3px;top:92.82px">均方根/μm</div>
<div class="a" style="left:93px;top:90.82px;width:94px;height:18px;border-bottom:1px solid #e6e6e6;border-right:1px solid #e6e6e6"></div>
<div class="t" style="left:96px;top:92.82px;font-size:9.3px">105.922</div>
<div class="a" style="left:187px;top:90.82px;width:94px;height:18px;border-bottom:1px solid #e6e6e6;border-right:1px solid #e6e6e6"></div>
<div class="t" style="left:190px;top:92.82px;font-size:9.3px">73.9971</div>
<div class="a" style="left:281px;top:90.82px;width:94px;height:18px;border-bottom:1px solid #e6e6e6;border-right:1px solid #e6e6e6"></div>
<div class="t" style="left:284px;top:92.82px;font-size:9.3px">91.3647</div>
<div class="a" style="left:0;top:108.90px;width:93px;height:18px;background:#efefef;border-bottom:1px solid #e2e2e2;border-right:1px solid #dcdcdc"></div>
<div class="t" style="left:3px;top:110.90px">指向稳定性/urad</div>
<div class="a" style="left:93px;top:108.90px;width:94px;height:18px;border-bottom:1px solid #e6e6e6;border-right:1px solid #e6e6e6"></div>
<div class="t" style="left:96px;top:110.90px;font-size:9.3px">0.0175645</div>
<div class="a" style="left:187px;top:108.90px;width:94px;height:18px;border-bottom:1px solid #e6e6e6;border-right:1px solid #e6e6e6"></div>
<div class="t" style="left:190px;top:110.90px;font-size:9.3px">0.0305457</div>
<div class="a" style="left:281px;top:108.90px;width:94px;height:18px;border-bottom:1px solid #e6e6e6;border-right:1px solid #e6e6e6"></div>
<div class="t" style="left:284px;top:110.90px;font-size:9.3px">0.0176178</div>
<div class="a" style="left:0;top:126.98px;width:93px;height:18px;background:#efefef;border-bottom:1px solid #e2e2e2;border-right:1px solid #dcdcdc"></div>
<div class="t" style="left:3px;top:128.98px">位置稳定性/μm</div>
<div class="a" style="left:93px;top:126.98px;width:94px;height:18px;border-bottom:1px solid #e6e6e6;border-right:1px solid #e6e6e6"></div>
<div class="t" style="left:96px;top:128.98px;font-size:9.3px">0.00526935</div>
<div class="a" style="left:187px;top:126.98px;width:94px;height:18px;border-bottom:1px solid #e6e6e6;border-right:1px solid #e6e6e6"></div>
<div class="t" style="left:190px;top:128.98px;font-size:9.3px">0.00916372</div>
<div class="a" style="left:281px;top:126.98px;width:94px;height:18px;border-bottom:1px solid #e6e6e6;border-right:1px solid #e6e6e6"></div>
<div class="t" style="left:284px;top:128.98px;font-size:9.3px">0.00528535</div>
<div class="a" style="left:374px;top:0;width:11px;height:141px;background:#f0f0f0;border-left:1px solid #e0e0e0;border-right:1px solid #a8a8a8"></div>
<div class="a" style="left:375.5px;top:25px;width:8px;height:90px;background:#cdcdcd"></div>
<svg class="a" style="left:376.5px;top:4px" width="7" height="5"><path d="M1 4l2.5-2.5L6 4" fill="none" stroke="#555" stroke-width="1"/></svg>
<svg class="a" style="left:376.5px;top:133px" width="7" height="5"><path d="M1 1l2.5 2.5L6 1" fill="none" stroke="#555" stroke-width="1"/></svg>
</div>

<div class="inp" style="left:439px;top:391px;width:99px;height:16px;border-color:#9a9a9a"><span class="t" style="left:1px;top:1px;font-size:9.5px">300.00</span><i class="sp"></i></div>


<!-- ===== status bar ===== -->
<div class="a" style="left:0;top:559px;width:768px;height:13px;background:#f9f9f9"></div>
<div class="t" style="left:0;top:559px">2048x1500</div>
<div class="a" style="left:690px;top:564px;width:40px;height:2px;background:#dcdcdc"></div>
<div class="a" style="left:684px;top:560px;width:6px;height:11px;background:#1a78dc"></div>
<div class="a" style="left:732px;top:560px;width:26px;height:11px;background:#fff;border:1px solid #9a9a9a"></div>
<div class="t" style="left:742px;top:559px;font-size:9.3px">0</div>
<svg class="a" style="left:760px;top:564px" width="8" height="8"><path d="M7 2v5h-5" fill="none" stroke="#c8c8c8" stroke-width="1" stroke-dasharray="1 1"/></svg>
<div class="t" style="left:56px;top:559px;font-size:9.27px">X:1.035578e+02um,Y:7.884106e+01um I:1; 0.39%</div>

</body></html>
